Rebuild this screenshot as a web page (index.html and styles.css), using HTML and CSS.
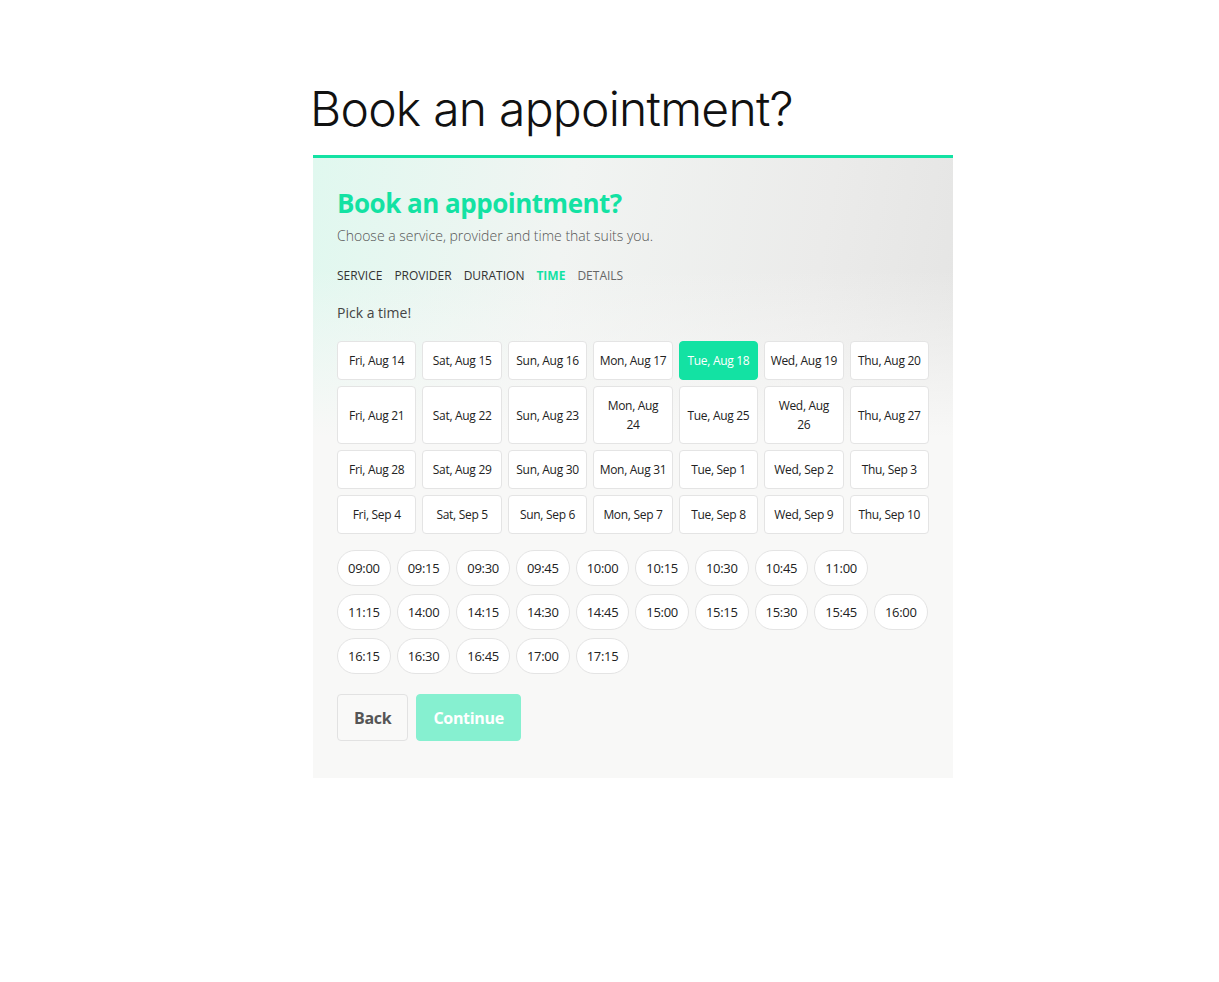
FILE: index.html
```html
<!DOCTYPE html>
<html lang="en">
<head>
<meta charset="utf-8">
<title>Book an appointment?</title>
<link rel="stylesheet" href="styles.css">
</head>
<body>
<main class="page">
  <h1 class="page-title">Book an appointment?</h1>
  <section class="card">
    <h2 class="card-title">Book an appointment?</h2>
    <p class="card-sub">Choose a service, provider and time that suits you.</p>
    <nav class="steps">
      <span class="step">SERVICE</span>
      <span class="step">PROVIDER</span>
      <span class="step">DURATION</span>
      <span class="step active">TIME</span>
      <span class="step muted">DETAILS</span>
    </nav>
    <p class="pick">Pick a time!</p>
    <div class="dates">
      <button class="date">Fri, Aug 14</button>
      <button class="date">Sat, Aug 15</button>
      <button class="date">Sun, Aug 16</button>
      <button class="date">Mon, Aug 17</button>
      <button class="date selected">Tue, Aug 18</button>
      <button class="date">Wed, Aug 19</button>
      <button class="date">Thu, Aug 20</button>
      <button class="date">Fri, Aug 21</button>
      <button class="date">Sat, Aug 22</button>
      <button class="date">Sun, Aug 23</button>
      <button class="date">Mon, Aug<br>24</button>
      <button class="date">Tue, Aug 25</button>
      <button class="date">Wed, Aug<br>26</button>
      <button class="date">Thu, Aug 27</button>
      <button class="date">Fri, Aug 28</button>
      <button class="date">Sat, Aug 29</button>
      <button class="date">Sun, Aug 30</button>
      <button class="date">Mon, Aug 31</button>
      <button class="date">Tue, Sep 1</button>
      <button class="date">Wed, Sep 2</button>
      <button class="date">Thu, Sep 3</button>
      <button class="date">Fri, Sep 4</button>
      <button class="date">Sat, Sep 5</button>
      <button class="date">Sun, Sep 6</button>
      <button class="date">Mon, Sep 7</button>
      <button class="date">Tue, Sep 8</button>
      <button class="date">Wed, Sep 9</button>
      <button class="date">Thu, Sep 10</button>
    </div>
    <div class="times">
      <div class="time-row">
        <button class="time">09:00</button>
        <button class="time">09:15</button>
        <button class="time">09:30</button>
        <button class="time">09:45</button>
        <button class="time">10:00</button>
        <button class="time">10:15</button>
        <button class="time">10:30</button>
        <button class="time">10:45</button>
        <button class="time">11:00</button>
      </div>
      <div class="time-row">
        <button class="time">11:15</button>
        <button class="time">14:00</button>
        <button class="time">14:15</button>
        <button class="time">14:30</button>
        <button class="time">14:45</button>
        <button class="time">15:00</button>
        <button class="time">15:15</button>
        <button class="time">15:30</button>
        <button class="time">15:45</button>
        <button class="time">16:00</button>
      </div>
      <div class="time-row">
        <button class="time">16:15</button>
        <button class="time">16:30</button>
        <button class="time">16:45</button>
        <button class="time">17:00</button>
        <button class="time">17:15</button>
      </div>
    </div>
    <div class="actions">
      <button class="btn btn-back">Back</button>
      <button class="btn btn-continue">Continue</button>
    </div>
  </section>
</main>
</body>
</html>
```

FILE: styles.css
```css
* { box-sizing: border-box; }

body {
  margin: 0;
  background: #ffffff;
  font-family: "Open Sans", "Noto Sans", sans-serif;
  color: #222;
}

.page {
  width: 640px;
  margin-left: 313px;
  padding-top: 80px;
}

.page-title {
  font-family: Inter, "Liberation Sans", sans-serif;
  font-weight: 300;
  font-size: 48px;
  line-height: 58px;
  letter-spacing: -0.75px;
  color: #111;
  margin: 0 0 17px -3px;
}

.card {
  border-top: 3px solid #13e2a3;
  background:
    linear-gradient(to bottom, rgba(248,248,247,0) 0%, rgba(248,248,247,0) 18%, #f8f8f7 45%),
    linear-gradient(100deg, #e0f8ef 0%, #f1f4f2 35%, #ebebea 70%, #e2e2e1 100%);
  padding: 28px 24px 37px;
}

.card-title {
  font-family: "Open Sans", sans-serif;
  font-weight: 700;
  font-size: 26px;
  line-height: 34px;
  letter-spacing: -0.5px;
  color: #13e2a3;
  margin: 0;
}

.card-sub {
  margin: 6px 0 0;
  font-size: 14px;
  font-weight: 300;
  line-height: 20px;
  color: #555;
}

.steps {
  display: flex;
  gap: 12px;
  margin-top: 22px;
  font-size: 12px;
  line-height: 16px;
  font-weight: 400;
  color: #333;
  letter-spacing: 0;
}

.step.active { color: #13e2a3; font-weight: 700; }
.step.muted { color: #666; }

.pick {
  margin: 19px 0 0;
  font-size: 14px;
  line-height: 20px;
  color: #444;
}

.dates {
  margin-top: 18px;
  display: grid;
  grid-template-columns: repeat(7, 1fr);
  gap: 6px;
  width: 592px;
}

button {
  font-family: "Open Sans", "Noto Sans", sans-serif;
  cursor: pointer;
}

.date {
  background: #fff;
  border: 1px solid #e4e4e4;
  border-radius: 4px;
  font-size: 12px;
  line-height: 19px;
  color: #222;
  padding: 9px 2px;
  min-height: 39px;
  letter-spacing: -0.3px;
  white-space: nowrap;
}

.date.selected {
  background: #13e2a3;
  border-color: #13e2a3;
  color: #fff;
}

.times {
  margin-top: 16px;
  display: flex;
  flex-direction: column;
  gap: 8px;
}

.time-row {
  display: flex;
  gap: 6px;
}

.time {
  height: 36px;
  border-radius: 18px;
  background: #fff;
  border: 1px solid #e4e4e4;
  font-size: 13px;
  color: #222;
  padding: 0 10px;
  letter-spacing: -0.3px;
}

.actions {
  margin-top: 20px;
  display: flex;
  gap: 8px;
}

.btn {
  height: 47px;
  border-radius: 4px;
  font-size: 16px;
  font-weight: 700;
  padding: 0 16px;
  letter-spacing: -0.3px;
}

.btn-back {
  background: #f9f9f8;
  border: 1px solid #e2e2e2;
  color: #555;
}

.btn-continue {
  background: #86f0d0;
  border: 1px solid #86f0d0;
  color: #fff;
}
```
